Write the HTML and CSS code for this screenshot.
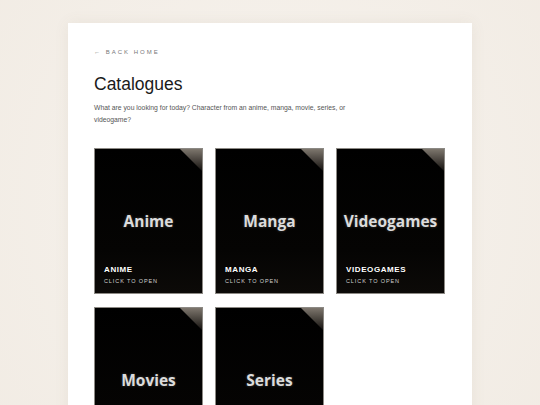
FILE: index.html
```html
<!DOCTYPE html>
<html lang="en">
<head>
  <meta charset="UTF-8" />
  <meta name="viewport" content="width=device-width, initial-scale=1.0"/>
  <title>Catalogues</title>
  <link rel="stylesheet" href="styles.css">
</head>
<body>
  <main class="sheet">
    <a class="back" href="#">&larr; Back home</a>
    <h1 class="title">Catalogues</h1>
    <p class="intro">What are you looking for today? Character from an anime, manga, movie, series, or videogame?</p>

    <div class="grid">
      <a class="card" href="#">
        <span class="card-art">Anime</span>
        <span class="card-name">Anime</span>
        <span class="card-hint">Click to open</span>
      </a>
      <a class="card" href="#">
        <span class="card-art">Manga</span>
        <span class="card-name">Manga</span>
        <span class="card-hint">Click to open</span>
      </a>
      <a class="card" href="#">
        <span class="card-art">Videogames</span>
        <span class="card-name">Videogames</span>
        <span class="card-hint">Click to open</span>
      </a>
      <a class="card" href="#">
        <span class="card-art">Movies</span>
        <span class="card-name">Movies</span>
        <span class="card-hint">Click to open</span>
      </a>
      <a class="card" href="#">
        <span class="card-art">Series</span>
        <span class="card-name">Series</span>
        <span class="card-hint">Click to open</span>
      </a>
    </div>
  </main>
</body>
</html>
```

FILE: styles.css
```css
body {
  margin: 0;
  font-family: 'Liberation Sans', Arial, sans-serif;
  background: radial-gradient(ellipse at 50% 40%, #f7f3ee, #f1ebe3);
  color: #222;
  min-height: 405px;
  overflow: hidden;
}

.sheet {
  width: 352px;
  margin: 23px auto 0;
  padding: 25px 26px 40px;
  background: #fff;
  box-shadow: 0 0 14px rgba(120, 100, 80, 0.08);
}

.back {
  display: block;
  font-size: 6px;
  letter-spacing: 2px;
  text-transform: uppercase;
  color: #777;
  text-decoration: none;
  line-height: 8px;
}

.title {
  margin: 18px 0 0;
  font-size: 17.5px;
  font-weight: normal;
  line-height: 20px;
  color: #1a1a1a;
}

.intro {
  margin: 8px 0 0;
  max-width: 262px;
  font-size: 6.8px;
  line-height: 12px;
  color: #555;
}

.grid {
  display: grid;
  grid-template-columns: repeat(3, 109px);
  grid-auto-rows: 146px;
  gap: 13px 12px;
  margin-top: 22px;
}

.card {
  position: relative;
  display: flex;
  flex-direction: column;
  justify-content: flex-end;
  box-sizing: border-box;
  padding: 0 9px 8px;
  background: linear-gradient(to bottom, #000 0%, #050403 70%, #0c0a08 100%);
  border: 1px solid #8c8984;
  color: #fff;
  text-decoration: none;
  overflow: hidden;
}

.card::after {
  content: "";
  position: absolute;
  top: 0;
  right: 0;
  width: 22px;
  height: 22px;
  background: linear-gradient(to bottom, #7d766d, #2a2622 80%, #141210);
  clip-path: polygon(0 0, 100% 0, 100% 100%);
}

/* the big word is part of the cover image, centered over the whole card */
.card-art {
  position: absolute;
  inset: 0;
  display: flex;
  align-items: center;
  justify-content: center;
  font-family: 'Open Sans', sans-serif;
  font-weight: bold;
  font-size: 15.5px;
  color: #dcdcdc;
  text-shadow: 0 0 3px rgba(255, 255, 255, 0.25);
}

.card-name {
  position: relative;
  font-weight: bold;
  font-size: 8px;
  letter-spacing: 0.6px;
  text-transform: uppercase;
  line-height: 10px;
}

.card-hint {
  position: relative;
  font-size: 5.5px;
  letter-spacing: 0.9px;
  text-transform: uppercase;
  color: #d0d0d0;
  line-height: 8px;
  margin-top: 2px;
}
```
